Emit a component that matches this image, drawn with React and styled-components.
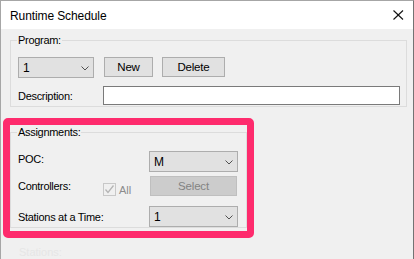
import React from 'react';
import styled, { createGlobalStyle } from 'styled-components';

const GlobalStyle = createGlobalStyle`
    * { box-sizing: border-box; }
    body {
        margin: 0;
        background: #ffffff;
        font-family: "Liberation Sans", Arial, sans-serif;
    }
`;

/* Parts ---------------------------*/
const Chevron = () => (
    <svg width="8" height="5" viewBox="0 0 8 5">
        <polyline points="0.5,0.5 4,4 7.5,0.5" fill="none" stroke="#505050" strokeWidth="1" />
    </svg>
);

const CloseIcon = () => (
    <svg width="11" height="10" viewBox="0 0 11 10">
        <line x1="0.5" y1="0.5" x2="10" y2="9.5" stroke="#111" strokeWidth="1.1" />
        <line x1="10" y1="0.5" x2="0.5" y2="9.5" stroke="#111" strokeWidth="1.1" />
    </svg>
);

const Dropdown = ({ value, width }) => (
    <DropdownStyled $width={width}>
        <span>{value}</span>
        <Chevron />
    </DropdownStyled>
);

const App = () => {
    return (
        <>
            <GlobalStyle />
            <Window>
                <TitleBar>
                    <Title>Runtime Schedule</Title>
                    <CloseIcon />
                </TitleBar>
                <Body>
                    <Group>
                        <Legend>Program:</Legend>
                        <ProgramBody>
                            <Row>
                                <Dropdown value="1" width={76} />
                                <Button $width={49} $left={10}>New</Button>
                                <Button $width={63} $left={9}>Delete</Button>
                            </Row>
                            <Row $top={8}>
                                <Label $width={85}>Description:</Label>
                                <TextInput />
                            </Row>
                        </ProgramBody>
                    </Group>

                    <Highlight>
                        <Group>
                            <Legend>Assignments:</Legend>
                            <AssignBody>
                                <Row>
                                    <Label $width={131} $shift={-3}>POC:</Label>
                                    <Dropdown value="M" width={89} />
                                </Row>
                                <Row $top={4}>
                                    <Label $width={85}>Controllers:</Label>
                                    <CheckArea>
                                        <CheckBox>
                                            <svg width="11" height="11" viewBox="0 0 11 11">
                                                <polyline points="1.5,5.5 4,8.5 9.5,1.5" fill="none" stroke="#b4b4b4" strokeWidth="1.3" />
                                            </svg>
                                        </CheckBox>
                                        <CheckText>All</CheckText>
                                    </CheckArea>
                                    <Button $width={87} $left={1} $disabled>Select</Button>
                                </Row>
                                <Row $top={10}>
                                    <Label $width={131}>Stations at a Time:</Label>
                                    <Dropdown value="1" width={89} />
                                </Row>
                            </AssignBody>
                        </Group>
                    </Highlight>

                    <Faded>Stations:</Faded>
                </Body>
            </Window>
        </>
    );
};

export default App;

/* Styles ---------------------------*/
const Window = styled.div`
    width: 414px;
    height: 259px;
    overflow: hidden;
    display: flex;
    flex-direction: column;
    background: #f0f0f0;
    border-top: 1px solid #a6a6a6;
    border-left: 1px solid #a6a6a6;
    border-right: 1px solid #737373;
    font-size: 11px;
    color: #000;
`;

const TitleBar = styled.div`
    height: 28px;
    flex-shrink: 0;
    background: #ffffff;
    display: flex;
    align-items: center;
    justify-content: space-between;
    padding: 0 9px 0 9px;
`;

const Title = styled.span`
    font-size: 12px;
    letter-spacing: -0.1px;
    margin-top: 1px;
`;

const Body = styled.div`
    padding: 4px 6px 0 9px;
    display: flex;
    flex-direction: column;
`;

const Group = styled.fieldset`
    margin: 0;
    padding: 0;
    border: 1px solid #dcdcdc;
    min-width: 0;
`;

const Legend = styled.legend`
    margin-left: 6px;
    padding: 0 1px;
    line-height: 14px;
    font-size: 11px;
    letter-spacing: -0.3px;
`;

const ProgramBody = styled.div`
    padding: 10px 6px 1px 7px;
    display: flex;
    flex-direction: column;
`;

const AssignBody = styled.div`
    padding: 12px 8px 0 7px;
    display: flex;
    flex-direction: column;
`;

const Row = styled.div`
    display: flex;
    align-items: center;
    margin-top: ${(p) => p.$top || 0}px;
`;

const Label = styled.span`
    width: ${(p) => p.$width}px;
    flex-shrink: 0;
    line-height: 14px;
    letter-spacing: -0.3px;
    position: relative;
    top: ${(p) => p.$shift || 0}px;
`;

const DropdownStyled = styled.div`
    width: ${(p) => p.$width}px;
    height: 21px;
    flex-shrink: 0;
    display: flex;
    align-items: center;
    justify-content: space-between;
    padding: 0 4px 0 4px;
    background: #e1e1e1;
    border: 1px solid #adadad;
    font-size: 12px;
    svg {
        margin-top: 1px;
    }
`;

const Button = styled.div`
    width: ${(p) => p.$width}px;
    height: 20px;
    margin-left: ${(p) => p.$left || 0}px;
    flex-shrink: 0;
    display: flex;
    align-items: center;
    justify-content: center;
    background: ${(p) => (p.$disabled ? '#cccccc' : '#e1e1e1')};
    border: 1px solid ${(p) => (p.$disabled ? '#bfbfbf' : '#adadad')};
    color: ${(p) => (p.$disabled ? '#838383' : '#000')};
    font-size: 11.5px;
    letter-spacing: -0.2px;
    align-self: flex-start;
`;

const TextInput = styled.div`
    flex: 1;
    height: 19px;
    background: #ffffff;
    border: 1px solid #7a7a7a;
`;

const Highlight = styled.div`
    margin: 11px 0 0 -7px;
    width: 251px;
    padding-bottom: 3px;
    border: 7px solid #fe2b6d;
    border-radius: 5px;
`;

const CheckArea = styled.div`
    width: 46px;
    flex-shrink: 0;
    align-self: flex-end;
    display: flex;
    align-items: center;
    gap: 3px;
`;

const CheckBox = styled.div`
    width: 13px;
    height: 13px;
    border: 1px solid #c8c8c8;
    background: #f0f0f0;
    display: flex;
    align-items: center;
    justify-content: center;
`;

const CheckText = styled.span`
    color: #8c8c8c;
    font-size: 11px;
    margin-top: 2px;
`;

const Faded = styled.div`
    margin: 8px 0 0 9px;
    color: #e6e6e6;
    font-size: 11px;
`;
